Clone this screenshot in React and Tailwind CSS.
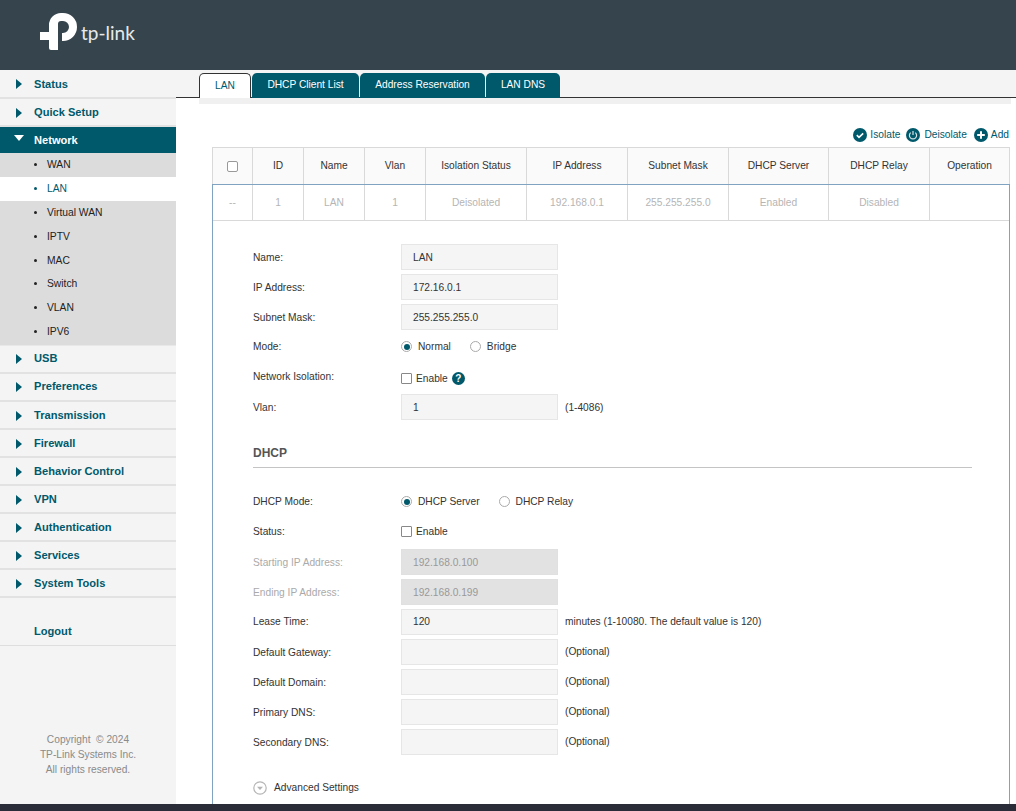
function Arrow({ open }) {
  return open ? (
    <svg width="10" height="6" viewBox="0 0 10 6" className="block"><path d="M0 0h10L5 6z" fill="#fff" /></svg>
  ) : (
    <svg width="6" height="10" viewBox="0 0 6 10" className="block"><path d="M0 0l6 5-6 5z" fill="#00596b" /></svg>
  );
}

function Logo() {
  return (
    <div className="flex items-start">
      <svg width="37" height="37" viewBox="0 0 37 37" className="block">
        <path d="M0 19H9V12A12 12 0 0 1 21 0H23A14 14 0 0 1 23 28H22V20H23A6 6 0 0 0 23 8H21A3 3 0 0 0 18 11V37H11A2 2 0 0 1 9 35V27H0Z" fill="#fff" />
      </svg>
      <span className="mt-[8px] ml-[4px] font-['Lato',sans-serif] text-[19px] leading-[24px] text-[#e6eaeb]">tp-link</span>
    </div>
  );
}

const sub = ["WAN", "LAN", "Virtual WAN", "IPTV", "MAC", "Switch", "VLAN", "IPV6"];
const botNav = ["USB", "Preferences", "Transmission", "Firewall", "Behavior Control", "VPN", "Authentication", "Services", "System Tools"];

function NavItem({ label, cls = "h-[28px]" }) {
  return (
    <div className={`flex items-center border-b-2 border-[#e2e2e2] text-[11.1px] font-bold text-[#00596b] ${cls}`}>
      <span className="ml-[16px] mr-[12px] w-[6px]"><Arrow /></span>
      {label}
    </div>
  );
}

function Sidebar() {
  return (
    <aside className="flex h-full w-[176px] shrink-0 flex-col bg-[#f4f4f4]">
      <NavItem label="Status" cls="h-[29px] pt-[1px]" />
      <NavItem label="Quick Setup" cls="h-[28px] pt-[1px]" />
      <div className="flex h-[26px] items-center bg-[#00596b] text-[11.1px] font-bold text-white">
        <span className="ml-[14px] mr-[10px] mb-[4px] w-[10px]"><Arrow open /></span>
        Network
      </div>
      <div className="border-b border-[#e8e8e8] bg-[#dcdcdc]">
        {sub.map((s, i) => (
          <div key={s} className={`flex h-[24px] items-center text-[10.3px] ${i >= 5 ? "pb-[3px]" : "pb-[1px]"} ${s === "LAN" ? "bg-white text-[#00596b]" : "text-[#222]"}`}>
            <span className={`ml-[34px] mr-[10px] h-[3px] w-[3px] rounded-full ${s === "LAN" ? "bg-[#00596b]" : "bg-[#222]"}`} />
            {s}
          </div>
        ))}
      </div>
      {botNav.map((l, i) => <NavItem key={l} label={l} cls={i < 2 ? "h-[28px] pb-[1px]" : "h-[28px] pt-[1px]"} />)}
      <div className="mt-[20px] flex h-[28px] items-center border-b border-[#dedede] pl-[34px] text-[11.1px] font-bold text-[#00596b]">Logout</div>
      <div className="mt-[86px] text-center text-[10.2px] leading-[15px] text-[#8a8a8a]">
        <div>Copyright &nbsp;© 2024</div>
        <div>TP-Link Systems Inc.</div>
        <div>All rights reserved.</div>
      </div>
    </aside>
  );
}

function Tabs() {
  const tabs = [["LAN", "w-[52px]"], ["DHCP Client List", "w-[107px]"], ["Address Reservation", "w-[125px]"], ["LAN DNS", "w-[74px]"]];
  return (
    <div>
      <div className="h-[28px] border-b border-[#333] bg-[#f4f4f4] pt-[3px] pl-[23px]">
        <div className="flex gap-[1px]">
          {tabs.map(([t, w], i) => (
            <div key={t} className={`flex h-[25px] items-center justify-center rounded-t-[5px] text-[10.2px] ${w} ${i === 0 ? "border border-b-0 border-[#333] bg-white text-[#00596b]" : "bg-[#00596b] pb-[2px] text-white"}`}>
              {t}
            </div>
          ))}
        </div>
      </div>
      <div className="ml-[23px] mr-[5px] h-[6px] bg-[#f0f0f0]" />
    </div>
  );
}

function Actions() {
  return (
    <div className="mr-[1px] flex h-[43px] items-center justify-end pt-[18px] text-[10.2px] text-[#00596b]">
      <svg width="14" height="14" viewBox="0 0 14 14" className="mr-[3px]"><circle cx="7" cy="7" r="7" fill="#00596b" /><path d="M3.8 7.2l2.2 2.1 4.2-4" fill="none" stroke="#fff" strokeWidth="1.6" /></svg>
      <span>Isolate</span>
      <svg width="14" height="14" viewBox="0 0 14 14" className="ml-[6px] mr-[4px]"><circle cx="7" cy="7" r="7" fill="#00596b" /><path d="M4.7 4.6a3.6 3.6 0 1 0 4.6 0M7 3v4" fill="none" stroke="#d5e3e6" strokeWidth="1.2" /></svg>
      <span>Deisolate</span>
      <svg width="14" height="14" viewBox="0 0 14 14" className="ml-[7px] mr-[3px]"><circle cx="7" cy="7" r="7" fill="#00596b" /><path d="M7 3.2v7.6M3.2 7h7.6" stroke="#fff" strokeWidth="2" /></svg>
      <span>Add</span>
    </div>
  );
}

const cols = [
  ["w-[40px]", null, "--"],
  ["w-[51px]", "ID", "1"],
  ["w-[61px]", "Name", "LAN"],
  ["w-[61px]", "Vlan", "1"],
  ["w-[101px]", "Isolation Status", "Deisolated"],
  ["w-[101px]", "IP Address", "192.168.0.1"],
  ["w-[101px]", "Subnet Mask", "255.255.255.0"],
  ["w-[100px]", "DHCP Server", "Enabled"],
  ["w-[101px]", "DHCP Relay", "Disabled"],
  ["flex-1", "Operation", ""],
];

function Table() {
  return (
    <>
      <div className="flex h-[37px] shrink-0 border border-b-0 border-[#d9d9d9] bg-[#fafafa] text-[10.2px] text-[#333]">
        {cols.map(([w, h], i) => (
          <div key={i} className={`flex items-center justify-center ${w} ${i < 9 ? "border-r border-[#d9d9d9]" : ""}`}>
            {h ?? <span className="h-[11px] w-[11px] rounded-[2px] border border-[#999] bg-white" />}
          </div>
        ))}
      </div>
      <div className="flex h-[37px] shrink-0 border-x border-t border-[#7fa3c0] text-[10.2px] text-[#b5b5b5]">
        {cols.map(([w, , v], i) => (
          <div key={i} className={`flex items-center justify-center border-b border-[#d9d9d9] pt-[1px] ${w} ${i < 9 ? "border-r" : ""}`}>{v}</div>
        ))}
      </div>
    </>
  );
}

function Field({ label, value = "", note, disabled, shift, labelShift }) {
  const s = shift ? "pt-[1px]" : "";
  return (
    <div className="flex h-[30px] items-center text-[10.2px]">
      <div className={`w-[148px] ${s} ${labelShift ? "pt-[1px]" : ""} ${disabled ? "text-[#aaa]" : "text-[#333]"}`}>{label}</div>
      <div className={`flex h-[26px] w-[157px] items-center border px-[11px] ${s} ${disabled ? "border-[#e0e0e0] bg-[#e2e2e2] text-[#999]" : "border-[#e6e6e6] bg-[#f5f5f5] text-[#333]"}`}>{value}</div>
      {note && <div className={`ml-[7px] text-[#333] ${s}`}>{note}</div>}
    </div>
  );
}

function Radio({ on, label, cls }) {
  return (
    <span className={`flex items-center ${cls}`}>
      <span className="mr-[6px] flex h-[11px] w-[11px] items-center justify-center rounded-full border border-[#aaa] bg-white">
        {on && <span className="h-[6px] w-[6px] rounded-full bg-[#00596b]" />}
      </span>
      {label}
    </span>
  );
}

function Row({ label, children }) {
  return (
    <div className="flex h-[30px] items-center text-[10.2px] text-[#333]">
      <div className="w-[148px]">{label}</div>
      {children}
    </div>
  );
}

function Check({ help }) {
  return (
    <span className="flex items-center">
      <span className="mr-[4px] h-[11px] w-[11px] rounded-[1px] border border-[#888] bg-white" />
      Enable
      {help && <span className="ml-[4px] flex h-[13px] w-[13px] items-center justify-center rounded-full bg-[#00596b] text-[10px] font-bold text-white">?</span>}
    </span>
  );
}

function Panel() {
  return (
    <div className="flex-1 overflow-hidden border-x border-[#7fa3c0] pl-[40px] pr-[37px]">
      <div className="h-[21px]" />
      <Field label="Name:" value="LAN" shift />
      <Field label="IP Address:" value="172.16.0.1" shift />
      <Field label="Subnet Mask:" value="255.255.255.0" shift />
      <Row label="Mode:">
        <Radio on label="Normal" cls="mr-[19px]" />
        <Radio label="Bridge" />
      </Row>
      <Row label="Network Isolation:"><span className="pt-[3px]"><Check help /></span></Row>
      <Field label="Vlan:" value="1" note="(1-4086)" shift />
      <div className="mt-[17px] flex h-[29px] items-center border-b border-[#c4c4c4] pb-[1px] text-[12px] font-bold text-[#555]">DHCP</div>
      <div className="h-[19px]" />
      <Row label="DHCP Mode:">
        <Radio on label="DHCP Server" cls="mr-[19px]" />
        <Radio label="DHCP Relay" />
      </Row>
      <Row label="Status:"><Check /></Row>
      <Field label="Starting IP Address:" value="192.168.0.100" disabled shift />
      <Field label="Ending IP Address:" value="192.168.0.199" disabled shift />
      <Field label="Lease Time:" value="120" note="minutes (1-10080. The default value is 120)" />
      <Field label="Default Gateway:" note="(Optional)" labelShift />
      <Field label="Default Domain:" note="(Optional)" labelShift />
      <Field label="Primary DNS:" note="(Optional)" labelShift />
      <Field label="Secondary DNS:" note="(Optional)" labelShift />
      <div className="mt-[23px] flex items-center text-[10.2px] text-[#333]">
        <svg width="14" height="14" viewBox="0 0 14 14" className="mr-[7px]"><circle cx="7" cy="7" r="6.2" fill="none" stroke="#b5b5b5" strokeWidth="1.2" /><path d="M4 5.8h6L7 9z" fill="#b5b5b5" /></svg>
        Advanced Settings
      </div>
    </div>
  );
}

export default function App() {
  return (
    <div className="flex h-[811px] w-[1016px] flex-col overflow-hidden bg-white font-['Liberation_Sans',Arial,sans-serif]">
      <header className="h-[70px] shrink-0 bg-[#36454d] pl-[40px] pt-[13px]"><Logo /></header>
      <div className="flex min-h-0 flex-1">
        <Sidebar />
        <main className="flex min-w-0 flex-1 flex-col">
          <Tabs />
          <div className="ml-[36px] mr-[6px] flex min-h-0 flex-1 flex-col">
            <Actions />
            <Table />
            <Panel />
          </div>
        </main>
      </div>
      <div className="h-[7px] shrink-0 bg-[#2a2c38]" />
    </div>
  );
}
